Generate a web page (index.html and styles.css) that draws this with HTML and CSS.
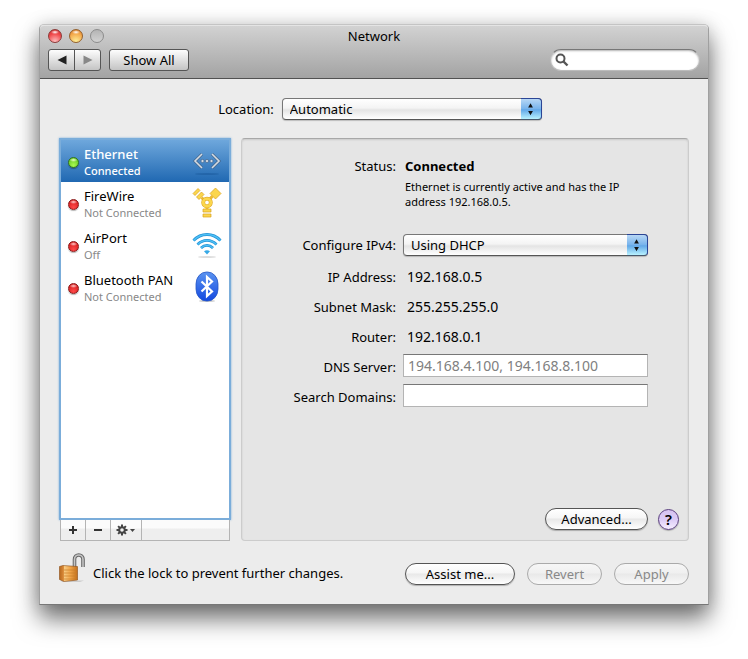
FILE: index.html
```html
<!DOCTYPE html>
<html lang="en">
<head>
  <meta charset="UTF-8">
  <meta name="viewport" content="width=device-width, initial-scale=1.0">
  <title>Network</title>
  <link rel="stylesheet" href="styles.css">
</head>
<body>
  <div class="window">
    <header class="titlebar">
      <div class="title-row">
        <div class="lights">
          <button class="light red" aria-label="Close"></button>
          <button class="light yellow" aria-label="Minimize"></button>
          <button class="light off" aria-label="Zoom" disabled></button>
        </div>
        <h1>Network</h1>
      </div>
      <div class="toolbar">
        <div class="nav">
          <button aria-label="Back"><svg width="10" height="10" viewBox="0 0 10 10"><path d="M9.500 .5v9L.5 5z" fill="#222"/></svg></button>
          <button aria-label="Forward" disabled><svg width="10" height="10" viewBox="0 0 10 10"><path d="M.5 .5v9l9-4.500z" fill="#888"/></svg></button>
        </div>
        <button class="show-all">Show All</button>
        <div class="search">
          <svg width="14" height="14" viewBox="0 0 14 14"><circle cx="5.500" cy="5.500" r="4" fill="none" stroke="#555" stroke-width="2"/><path d="M8.500 8.500l4 4" stroke="#555" stroke-width="2.400"/></svg>
          <input type="search" aria-label="Search">
        </div>
      </div>
    </header>

    <main>
      <div class="location">
        <label for="location">Location:</label>
        <span class="popup">
          <select id="location"><option>Automatic</option></select>
          <svg class="cap" width="21" height="19" viewBox="0 0 21 19"><path d="M7.500 8l2.500-4.500L12.500 8zM7.500 11.500h5L10 16z" fill="#111"/></svg>
        </span>
      </div>

      <div class="columns">
        <section class="sidebar">
          <ul class="services">
            <li>
              <button class="service selected">
                <span class="dot green"></span>
                <span class="service-text"><span class="name">Ethernet</span><span class="state">Connected</span></span>
                <svg width="30" height="32" viewBox="0 0 30 32">
                  <ellipse cx="15" cy="29" rx="12" ry="1" fill="#1d5c9f" opacity=".6"/>
                  <path d="M10 9l-7 7 7 7M20 9l7 7-7 7" fill="none" stroke="#46678c" stroke-width="3"/>
                  <path d="M10 9l-7 7 7 7M20 9l7 7-7 7" fill="none" stroke="#d5dbe2" stroke-width="1.600"/>
                  <g fill="#d5dbe2" stroke="#46678c" stroke-width=".7"><circle cx="10.500" cy="16" r="1.600"/><circle cx="15" cy="16" r="1.600"/><circle cx="19.500" cy="16" r="1.600"/></g>
                </svg>
              </button>
            </li>
            <li>
              <button class="service">
                <span class="dot"></span>
                <span class="service-text"><span class="name">FireWire</span><span class="state">Not Connected</span></span>
                <svg width="30" height="32" viewBox="0 0 30 32">
                  <g fill="#fbd64c" stroke="#d9a21f" stroke-width=".7">
                    <path d="M18 6.500L23.500 1 29 6.500 23.500 12z"/>
                    <path d="M1 6.500L6 1.500l2 2-5 5zM4.500 10l5-5 2.500 2.500-5 5z"/>
                    <path d="M11 22h8v3h-8zM11 27h8v3h-8z"/>
                  </g>
                  <path d="M9.500 10.500l3 3M20.500 9l-3 3.500M15 19v3" stroke="#eebb32" stroke-width="3"/>
                  <circle cx="15" cy="15.500" r="3.800" fill="#fff" stroke="#d9a21f" stroke-width="3.800"/>
                  <circle cx="15" cy="15.500" r="3.800" fill="none" stroke="#fbd64c" stroke-width="2.800"/>
                </svg>
              </button>
            </li>
            <li>
              <button class="service">
                <span class="dot"></span>
                <span class="service-text"><span class="name">AirPort</span><span class="state">Off</span></span>
                <svg width="30" height="32" viewBox="0 0 30 32">
                  <ellipse cx="15" cy="28" rx="9" ry="1" fill="#ddd"/>
                  <g fill="none" stroke="#2392d6" stroke-width="2.800">
                    <path d="M1.500 11.500C9 3.500 21 3.500 28.500 11.500"/>
                    <path d="M5.500 15.500c5.500-5.500 13.500-5.500 19 0"/>
                    <path d="M9 19c3.500-3.500 8.500-3.500 12 0"/>
                  </g>
                  <g fill="none" stroke="#4fc1f5" stroke-width="1.400">
                    <path d="M1.500 11.500C9 3.500 21 3.500 28.500 11.500"/>
                    <path d="M5.500 15.500c5.500-5.500 13.500-5.500 19 0"/>
                    <path d="M9 19c3.500-3.500 8.500-3.500 12 0"/>
                  </g>
                  <path d="M12 22.200c2-1.400 4-1.400 6 0l-3 3.300z" fill="#37a9e6"/>
                </svg>
              </button>
            </li>
            <li>
              <button class="service">
                <span class="dot"></span>
                <span class="service-text"><span class="name">Bluetooth PAN</span><span class="state">Not Connected</span></span>
                <svg width="30" height="32" viewBox="0 0 30 32">
                  <defs><linearGradient id="bt" x1="0" y1="0" x2="0" y2="1"><stop offset="0" stop-color="#5a93f0"/><stop offset="1" stop-color="#1449e0"/></linearGradient></defs>
                  <ellipse cx="15" cy="30" rx="8" ry="1" fill="#ccc"/>
                  <rect x="4" y="1" width="22" height="29" rx="10.500" ry="12" fill="url(#bt)" stroke="#2456c4" stroke-width=".8"/>
                  <path d="M9.500 10.500l10.500 10-5 4.500V6l5 4.500-10.500 10" fill="none" stroke="#fff" stroke-width="2.200"/>
                </svg>
              </button>
            </li>
          </ul>
          <div class="list-tools">
            <button aria-label="Add"><svg width="10" height="10" viewBox="0 0 10 10"><path d="M5 1v8M1 5h8" stroke="#333" stroke-width="2"/></svg></button>
            <button aria-label="Remove"><svg width="10" height="10" viewBox="0 0 10 10"><path d="M1 5h8" stroke="#333" stroke-width="2"/></svg></button>
            <button class="gear" aria-label="Actions">
              <svg width="20" height="12" viewBox="0 0 20 12">
                <path d="M6 .5v11M.5 6h11M2.100 2.100l7.800 7.800M9.900 2.100L2.100 9.900" stroke="#444" stroke-width="2"/>
                <circle cx="6" cy="6" r="2.800" fill="#f2f2f2" stroke="#444" stroke-width="2"/>
                <path d="M14 5h5l-2.500 3z" fill="#444"/>
              </svg>
            </button>
          </div>
        </section>

        <section class="panel">
          <div class="row status">
            <span class="label">Status:</span>
            <div class="status-text">
              <strong>Connected</strong>
              <p>Ethernet is currently active and has the IP address 192.168.0.5.</p>
            </div>
          </div>
          <div class="row configure">
            <label class="label" for="ipv4">Configure IPv4:</label>
            <span class="popup">
              <select id="ipv4"><option>Using DHCP</option></select>
              <svg class="cap" width="21" height="19" viewBox="0 0 21 19"><path d="M7.500 8l2.500-4.500L12.500 8zM7.500 11.500h5L10 16z" fill="#111"/></svg>
            </span>
          </div>
          <div class="row"><span class="label">IP Address:</span><span class="value">192.168.0.5</span></div>
          <div class="row"><span class="label">Subnet Mask:</span><span class="value">255.255.255.0</span></div>
          <div class="row"><span class="label">Router:</span><span class="value">192.168.0.1</span></div>
          <div class="row"><label class="label" for="dns">DNS Server:</label><input class="field" id="dns" type="text" placeholder="194.168.4.100, 194.168.8.100"></div>
          <div class="row"><label class="label" for="domains">Search Domains:</label><input class="field" id="domains" type="text"></div>
          <div class="panel-actions">
            <button class="pill advanced">Advanced...</button>
            <button class="help" aria-label="Help">?</button>
          </div>
        </section>
      </div>

      <footer>
        <button class="lock" aria-label="Lock">
          <svg width="28" height="32" viewBox="0 0 28 32">
            <defs><linearGradient id="brass" x1="0" y1="0" x2="1" y2="0"><stop offset="0" stop-color="#b8681d"/><stop offset=".22" stop-color="#d98a38"/><stop offset=".26" stop-color="#f8cd86"/><stop offset=".6" stop-color="#f0a549"/><stop offset="1" stop-color="#c26f1c"/></linearGradient></defs>
            <path d="M2 28.500h23l-4 1.500H3z" fill="#ccc"/>
            <path d="M15.500 16V7.500c0-6 8.500-6 8.500 0V15" fill="none" stroke="#666" stroke-width="3.600"/>
            <path d="M15.500 16V7.500c0-6 8.500-6 8.500 0V15" fill="none" stroke="#c4c4c4" stroke-width="1.600"/>
            <path d="M.5 14.500L4 13.500l14.500 1V28L5 29.500.5 27.500z" fill="url(#brass)" stroke="#8c4d18" stroke-width=".6"/>
            <path d="M5 18h13M5 21h13M5 24h13M5 27h13" stroke="#c97e29" stroke-width=".7"/>
          </svg>
        </button>
        <span class="lock-text">Click the lock to prevent further changes.</span>
        <button class="pill assist">Assist me...</button>
        <button class="pill" disabled>Revert</button>
        <button class="pill" disabled>Apply</button>
      </footer>
    </main>
  </div>
</body>
</html>
```
FILE: styles.css
```css
* {
  box-sizing: border-box;
}
body {
  margin: 0;
  padding: 24px 39px 54px;
  background: #fff;
  color: #000;
  font-family: "Noto Sans", "Open Sans", sans-serif;
  font-size: 13px;
  line-height: 18px;
}
button, input, select {
  font: inherit;
  color: inherit;
  margin: 0;
}
button {
  padding: 0;
  border: none;
  background: none;
}
svg {
  display: block;
  flex: none;
}
.window {
  background: #ececec;
  border: 1px solid #a0a0a0;
  border-top-color: #c4c4c4;
  border-bottom-color: #777;
  border-radius: 5px 5px 0 0;
  box-shadow: 0 14px 24px rgba(0,0,0,0.55), 0 0 18px rgba(0,0,0,0.15);
}

/* title bar */
.titlebar {
  padding: 1px 8px 7px;
  background: linear-gradient(#d2d2d2, #a3a3a3);
  border-top: 1px solid #e4e4e4;
  border-bottom: 1px solid #515151;
  border-radius: 4px 4px 0 0;
}
.title-row {
  display: grid;
  grid-template-columns: 1fr auto 1fr;
  align-items: center;
  height: 16px;
  margin-bottom: 6px;
}
h1 {
  margin: 0;
  font-size: 13px;
  font-weight: normal;
}
.lights {
  display: flex;
  gap: 7px;
}
.light {
  width: 14px;
  height: 14px;
  border: 1px solid #8c8c8c;
  border-radius: 50%;
  background: linear-gradient(#b4b4b4, #d2d2d2);
}
.light.red {
  border-color: #8c3a38;
  background: radial-gradient(ellipse 4px 2px at 50% 18%, #fff, transparent), radial-gradient(circle at 50% 95%, #ffc0c0, #f04a4c 60%, #c62a2c);
}
.light.yellow {
  border-color: #94602c;
  background: radial-gradient(ellipse 4px 2px at 50% 18%, #fff, transparent), radial-gradient(circle at 50% 95%, #fff09a, #f3a547 65%, #cf7326);
}
.toolbar {
  display: flex;
  align-items: center;
}
.nav {
  display: flex;
  margin-right: 8px;
}
.nav button, .show-all {
  display: flex;
  align-items: center;
  justify-content: center;
  height: 22px;
  border: 1px solid #555;
  background: linear-gradient(#fdfdfd, #c4c4c4);
}
.nav button {
  width: 27px;
}
.nav button:first-child {
  border-radius: 3px 0 0 3px;
}
.nav button:last-child {
  margin-left: -1px;
  border-radius: 0 3px 3px 0;
}
.show-all {
  width: 80px;
  border-radius: 3px;
}
.search {
  display: flex;
  align-items: center;
  width: 150px;
  height: 22px;
  margin-left: auto;
  padding: 0 8px 0 4px;
  background: #fff;
  border: 1px solid #bbb;
  border-top-color: #777;
  border-radius: 11px;
  box-shadow: inset 0 1px 2px rgba(0,0,0,0.3);
}
.search input {
  flex: 1;
  min-width: 0;
  border: none;
  outline: none;
  background: none;
  appearance: none;
}

/* content */
main {
  padding: 19px;
}
.location {
  display: flex;
  justify-content: center;
  align-items: center;
  gap: 8px;
  padding-left: 12px;
  margin-bottom: 18px;
}
.location .popup {
  width: 260px;
}
.popup {
  position: relative;
  display: block;
  width: 245px;
}
.popup select {
  display: block;
  width: 100%;
  height: 22px;
  padding: 0 24px 0 7px;
  appearance: none;
  border: 1px solid #777;
  border-bottom-color: #555;
  border-radius: 4px;
  background: linear-gradient(#fff, #f4f4f4 45%, #e4e4e4 55%, #fff);
  box-shadow: 0 1px 1px rgba(0,0,0,0.2);
}
.cap {
  position: absolute;
  top: 0;
  right: 0;
  height: 22px;
  border: 1px solid #2b4596;
  border-left: none;
  border-bottom-color: #47586c;
  border-radius: 0 4px 4px 0;
  background: linear-gradient(#b7d7f5, #79b4ec 48%, #62a8e8 54%, #b8f2ff);
  pointer-events: none;
}
.columns {
  display: flex;
  gap: 10px;
}
.sidebar {
  display: flex;
  flex-direction: column;
  width: 172px;
}
.services {
  flex: 1;
  margin: 0;
  padding: 0;
  list-style: none;
  background: #fff;
  border: 2px solid #7badda;
  box-shadow: 0 0 2px #7badda;
}
.service {
  display: flex;
  align-items: center;
  width: 100%;
  height: 42px;
  padding: 0 7px;
  text-align: left;
}
.service-text {
  flex: 1;
  margin-left: 5px;
}
.name, .state {
  display: block;
  white-space: nowrap;
}
.name {
  line-height: 18px;
}
.state {
  color: #888;
  font-size: 11px;
  line-height: 15px;
}
.selected {
  background: linear-gradient(#6ea7dc, #2068b2);
  color: #fff;
  font-weight: 500;
}
.selected .state {
  color: #fff;
}
.dot {
  width: 11px;
  height: 11px;
  margin-top: 2px;
  border: 1px solid #8a1717;
  border-radius: 50%;
  background: radial-gradient(ellipse 4px 2px at 50% 22%, #ffd0d0, transparent), radial-gradient(circle at 50% 80%, #ff4a4a, #cc1010);
  box-shadow: 0 1px 1px rgba(0,0,0,0.3);
}
.dot.green {
  border-color: #34751b;
  background: radial-gradient(ellipse 4px 2px at 50% 22%, #efffd0, transparent), radial-gradient(circle at 50% 80%, #a9f950, #54bc18);
}
.list-tools {
  display: flex;
  height: 21px;
  margin: 0 1px;
  border: 1px solid #b4b4b4;
  border-top: none;
  background: linear-gradient(#fbfbfb 40%, #eee 45%, #eee);
}
.list-tools button {
  display: flex;
  align-items: center;
  justify-content: center;
  width: 25px;
  border-right: 1px solid #b4b4b4;
}
.list-tools .gear {
  width: 31px;
}
.panel {
  display: flex;
  flex: 1;
  flex-direction: column;
  min-width: 0;
  min-height: 403px;
  padding: 18px 9px 10px 0;
  background: #e5e5e5;
  border: 1px solid #ccc;
  border-top-color: #a8a8a8;
  border-radius: 4px;
  box-shadow: inset 0 1px 2px rgba(0,0,0,0.12);
}
.row {
  display: flex;
  align-items: center;
  gap: 7px;
  min-height: 30px;
}
.label {
  flex: none;
  width: 154px;
  text-align: right;
}
.status {
  align-items: flex-start;
  min-height: 71px;
}
.configure {
  min-height: 34px;
}
.status-text {
  width: 240px;
  padding-left: 2px;
}
.status-text p {
  margin: 4px 0 0;
  font-size: 11px;
  line-height: 15px;
}
.value {
  padding-left: 4px;
  font-size: 14px;
}
.field {
  width: 245px;
  height: 23px;
  margin-bottom: 4px;
  padding: 0 4px;
  border: 1px solid #b4b4b4;
  border-top-color: #777;
  background: #fff;
  font-size: 14px;
}
.field::placeholder {
  color: #808080;
}
.panel-actions {
  display: flex;
  justify-content: flex-end;
  align-items: center;
  gap: 10px;
  margin-top: auto;
}
.pill {
  width: 75px;
  height: 22px;
  border: 1px solid #555;
  border-radius: 11px;
  line-height: 18px;
  background: linear-gradient(#fff, #f6f6f6 45%, #e8e8e8 50%, #fff);
  box-shadow: 0 1px 1px rgba(0,0,0,0.25);
}
.pill:disabled {
  color: #888;
  border-color: #aaa;
  background: linear-gradient(#f6f6f6, #f0f0f0 45%, #e9e9e9 50%, #f8f8f8);
  box-shadow: none;
}
.advanced {
  width: 103px;
}
.assist {
  width: 110px;
}
.help {
  width: 21px;
  height: 21px;
  border: 1px solid #5b3f80;
  border-radius: 50%;
  font-size: 15px;
  font-weight: 600;
  background: linear-gradient(#d6c2f0, #dccbf6 50%, #f6eeff);
  box-shadow: 0 1px 1px rgba(0,0,0,0.25);
}
footer {
  display: flex;
  align-items: center;
  gap: 12px;
  margin-top: 10px;
}
.lock-text {
  flex: 1;
  margin-left: -6px;
  padding-top: 10px;
}
footer .pill {
  margin-top: 12px;
}
```
